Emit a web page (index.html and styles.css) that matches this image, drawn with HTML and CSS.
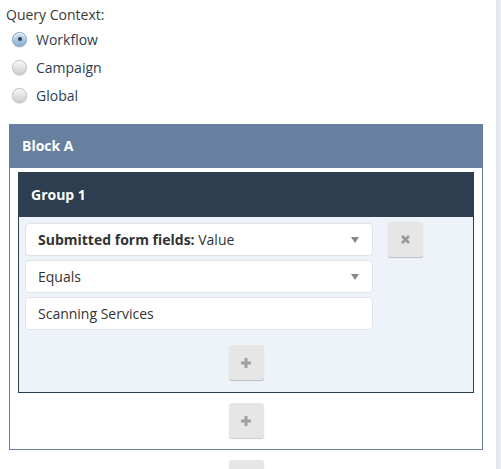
FILE: index.html
```html
<!DOCTYPE html>
<html>
<head>
<meta charset="utf-8">
<link rel="stylesheet" href="styles.css">
</head>
<body>
<div class="main">
  <div class="ctx-label">Query Context:</div>
  <div class="radios">
    <label class="radio"><span class="dot checked"></span><span>Workflow</span></label>
    <label class="radio"><span class="dot"></span><span>Campaign</span></label>
    <label class="radio"><span class="dot"></span><span>Global</span></label>
  </div>
  <div class="block">
    <div class="block-head">Block A</div>
    <div class="block-body">
      <div class="group">
        <div class="group-head">Group 1</div>
        <div class="group-body">
          <div class="cond">
            <div class="fields">
              <div class="field select"><span><b>Submitted form fields:</b> Value</span><span class="caret"></span></div>
              <div class="field select"><span>Equals</span><span class="caret"></span></div>
              <div class="field"><span>Scanning Services</span></div>
            </div>
            <button class="btn"><svg width="11" height="11" viewBox="0 0 11 11"><path d="M2 2 L9 9 M9 2 L2 9" stroke="#9a9a9a" stroke-width="2.8" stroke-linecap="butt"/></svg></button>
          </div>
          <div class="center"><button class="btn"><svg width="12" height="12" viewBox="0 0 12 12"><path d="M6 1 V11 M1 6 H11" stroke="#a0a0a0" stroke-width="3"/></svg></button></div>
        </div>
      </div>
      <div class="center add-group"><button class="btn"><svg width="12" height="12" viewBox="0 0 12 12"><path d="M6 1 V11 M1 6 H11" stroke="#a0a0a0" stroke-width="3"/></svg></button></div>
    </div>
  </div>
  <div class="center add-block"><button class="btn"><svg width="12" height="12" viewBox="0 0 12 12"><path d="M6 1 V11 M1 6 H11" stroke="#a0a0a0" stroke-width="3"/></svg></button></div>
</div>
<div class="strip"></div>
</body>
</html>
```
FILE: styles.css
```css
html, body {
  margin: 0;
  height: 469px;
  overflow: hidden;
  background: #fff;
}
body {
  display: flex;
  font-family: "Open Sans", "DejaVu Sans", sans-serif;
  font-size: 14px;
  color: #333;
}
.main {
  width: 496px;
  padding: 5px 0 0 6px;
  box-sizing: border-box;
}
.strip {
  width: 5px;
  background: linear-gradient(to right, #e2e4ee, #eceef5);
}
.ctx-label {
  line-height: 20px;
  color: #3a3a3a;
}
.radios {
  display: flex;
  flex-direction: column;
}
.radio {
  display: flex;
  align-items: center;
  height: 28px;
  color: #2c3e50;
}
.dot {
  width: 15px;
  height: 15px;
  border-radius: 50%;
  margin: 0 9px 0 6px;
  box-sizing: border-box;
  border: 1px solid #b8b8b8;
  background: linear-gradient(#f6f6f6, #cfcfcf);
  box-shadow: inset 0 1px 1px #fff, 0 1px 1px rgba(0,0,0,0.12);
  position: relative;
}
.dot.checked {
  border-color: #7a9dbd;
  background: linear-gradient(#cfe1f2, #88aed2);
}
.dot.checked::after {
  content: "";
  position: absolute;
  left: 4.5px;
  top: 4.5px;
  width: 4px;
  height: 4px;
  border-radius: 50%;
  background: #2c3e50;
}
.block {
  margin: 15px 0 0 3px;
  width: 474px;
}
.block-head {
  background: #67809f;
  color: #fff;
  font-weight: bold;
  height: 44px;
  line-height: 44px;
  padding-left: 13px;
}
.block-body {
  border: 1px solid #67809f;
  border-top: none;
  padding: 4px 8px 11px 8px;
}
.group-head {
  background: #2c3e50;
  color: #fff;
  font-weight: bold;
  height: 45px;
  line-height: 45px;
  padding-left: 13px;
}
.group-body {
  background: #eef2f9;
  border: 1px solid #2c3e50;
  border-top: none;
  padding: 6px 6px 12px 6px;
}
.cond {
  display: flex;
  gap: 15px;
  align-items: flex-start;
}
.fields {
  display: flex;
  flex-direction: column;
  gap: 4px;
  width: 348px;
}
.field {
  height: 33px;
  box-sizing: border-box;
  background: #fff;
  border: 1px solid #dfe3ea;
  border-radius: 4px;
  padding: 0 12px;
  display: flex;
  align-items: center;
  justify-content: space-between;
  color: #333;
}
.field b {
  color: #333;
}
.caret {
  width: 0;
  height: 0;
  border-left: 4px solid transparent;
  border-right: 4px solid transparent;
  border-top: 6px solid #888;
  margin-right: 1px;
}
.btn {
  width: 35px;
  height: 35px;
  border: none;
  border-radius: 3px;
  background: #e6e6e6;
  box-shadow: 0 1px 1px rgba(0, 0, 0, 0.22);
  display: flex;
  align-items: center;
  justify-content: center;
  padding: 0;
  margin: 0;
}
.cond .btn {
  margin-top: -1px;
}
.center {
  display: flex;
  justify-content: center;
  margin-top: 15px;
}
.add-group {
  margin-top: 10px;
}
.add-block {
  margin-top: 10px;
  width: 474px;
  margin-left: 3px;
}
```
